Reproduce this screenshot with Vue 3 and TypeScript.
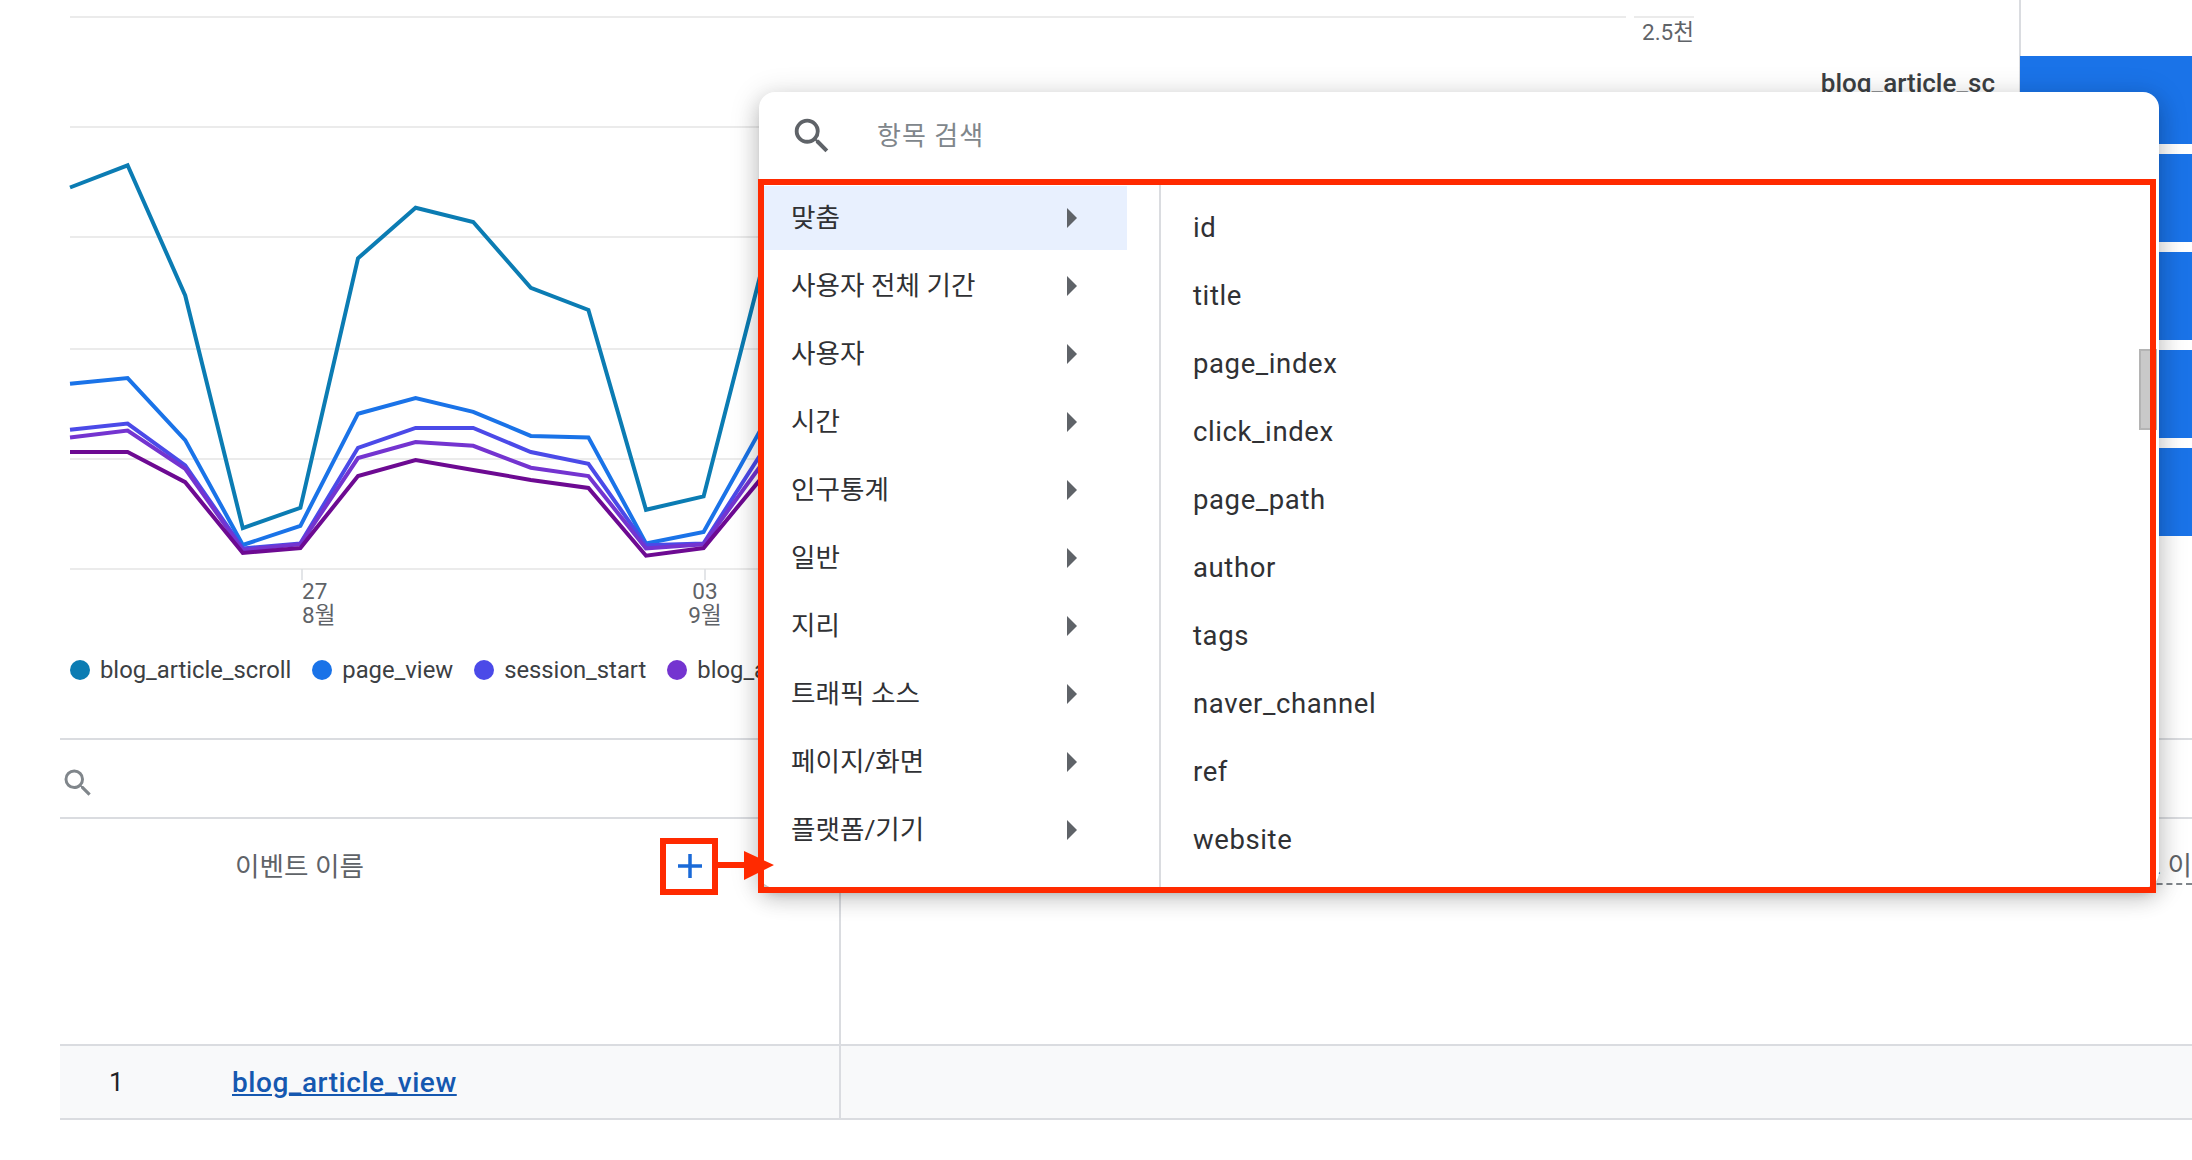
<script setup lang="ts">
const xStart = 70
const xStep = 57.6

const series = [
  { color: '#0b7cb3', ys: [187.5, 165.3, 295.4, 528.1, 507.8, 258.3, 207.8, 222, 287.8, 310, 509.8, 496.4, 271.7] },
  { color: '#1a73e8', ys: [383.8, 378.1, 440.1, 545, 525.8, 413.7, 398, 411.8, 435.9, 437.4, 543.4, 532, 428.6] },
  { color: '#4b4ae8', ys: [429.8, 423.6, 465.4, 548.4, 543.4, 447.8, 427.9, 427.9, 452, 463.8, 545.3, 543.4, 453.5] },
  { color: '#7434d0', ys: [437.4, 430.5, 468.8, 550, 544.2, 458.1, 442, 445.8, 467.7, 476.1, 548.4, 544.2, 465] },
  { color: '#6d0a92', ys: [452, 452, 482.2, 553, 548, 476.1, 460, 470, 479.9, 487.9, 555.7, 548, 478.4] },
]

const toPoints = (ys: number[]) => ys.map((y, i) => `${xStart + i * xStep},${y}`).join(' ')

const gridYs = [127, 237, 349, 459, 569]
const bars = [1, 2, 3, 4, 5]

const legend = [
  { label: 'blog_article_scroll', color: '#0b7cb3' },
  { label: 'page_view', color: '#1a73e8' },
  { label: 'session_start', color: '#4b4ae8' },
  { label: 'blog_article_view', color: '#7434d0' },
]

const categories = ['맞춤', '사용자 전체 기간', '사용자', '시간', '인구통계', '일반', '지리', '트래픽 소스', '페이지/화면', '플랫폼/기기']
const fields = ['id', 'title', 'page_index', 'click_index', 'page_path', 'author', 'tags', 'naver_channel', 'ref', 'website']
</script>

<template>
  <div class="page">
    <section class="top">
      <div class="chart-col">
        <svg class="chart" width="2020" height="632" viewBox="0 0 2020 632">
          <line x1="70" y1="17" x2="1626" y2="17" class="grid" />
          <line x1="1634" y1="17" x2="1694" y2="17" class="grid" />
          <line v-for="y in gridYs" :key="y" x1="70" :y1="y" x2="1694" :y2="y" class="grid" />
          <line x1="302" y1="569" x2="302" y2="580" class="tick" />
          <line x1="705" y1="569" x2="705" y2="580" class="tick" />
          <polyline
            v-for="s in series"
            :key="s.color"
            :points="toPoints(s.ys)"
            :stroke="s.color"
            class="trend"
          />
          <text x="1642" y="40" class="axis">2.5천</text>
          <text x="1995" y="92" text-anchor="end" class="series-name">blog_article_sc</text>
          <text x="302" y="599" class="axis">27</text>
          <text x="302" y="623" class="axis">8월</text>
          <text x="705" y="599" text-anchor="middle" class="axis">03</text>
          <text x="705" y="623" text-anchor="middle" class="axis">9월</text>
        </svg>
        <div class="legend">
          <div v-for="item in legend" :key="item.label" class="legend-item">
            <span class="dot" :style="{ background: item.color }"></span>
            <span>{{ item.label }}</span>
          </div>
        </div>
      </div>
      <div class="bars">
        <div v-for="b in bars" :key="b" class="bar"></div>
      </div>
    </section>

    <section class="table">
      <div class="table-search">
        <svg width="36" height="36" viewBox="0 0 24 24" fill="#80868b">
          <path d="M15.5 14h-.79l-.28-.27A6.47 6.47 0 0 0 16 9.5 6.5 6.5 0 1 0 9.5 16c1.61 0 3.09-.59 4.23-1.57l.27.28v.79l5 4.99L20.49 19l-4.99-5zm-6 0C7.01 14 5 11.99 5 9.5S7.01 5 9.5 5 14 7.01 14 9.5 11.99 14 9.5 14z" />
        </svg>
      </div>
      <div class="table-head">
        <div class="head-name">
          <span class="head-label">이벤트 이름</span>
          <svg class="plus" width="24" height="24" viewBox="0 0 24 24">
            <path d="M12 0v24M0 12h24" stroke="#1a6ad8" stroke-width="3.5" fill="none" />
          </svg>
        </div>
        <div class="head-metric">
          <span class="metric-label">이벤트 이</span>
        </div>
      </div>
      <div class="table-row">
        <div class="row-name">
          <span class="row-index">1</span>
          <a class="row-link">blog_article_view</a>
        </div>
      </div>
    </section>

    <div class="picker">
      <div class="picker-search">
        <svg width="46" height="46" viewBox="0 0 24 24" fill="#5f6368">
          <path d="M15.5 14h-.79l-.28-.27A6.47 6.47 0 0 0 16 9.5 6.5 6.5 0 1 0 9.5 16c1.61 0 3.09-.59 4.23-1.57l.27.28v.79l5 4.99L20.49 19l-4.99-5zm-6 0C7.01 14 5 11.99 5 9.5S7.01 5 9.5 5 14 7.01 14 9.5 11.99 14 9.5 14z" />
        </svg>
        <span class="picker-placeholder">항목 검색</span>
      </div>
      <div class="picker-body">
        <ul class="categories">
          <li v-for="(c, i) in categories" :key="c" class="category" :class="{ active: i === 0 }">
            <span class="category-label">{{ c }}</span>
            <i class="caret"></i>
          </li>
        </ul>
        <ul class="fields">
          <li v-for="f in fields" :key="f" class="field">{{ f }}</li>
        </ul>
        <div class="scroll-thumb"></div>
      </div>
    </div>

    <div class="mark mark-panel"></div>
    <div class="mark mark-plus"></div>
    <svg class="mark-arrow" width="60" height="32" viewBox="0 0 60 32">
      <path d="M0 13h28V2l30 14-30 15V19H0z" fill="#ff2a00" />
    </svg>
  </div>
</template>

<style scoped>
.page {
  position: relative;
  width: 2192px;
  height: 1160px;
  overflow: hidden;
  background: #fff;
  font-family: Roboto, "Noto Sans CJK KR", sans-serif;
  color: #202124;
}

.top {
  display: flex;
  height: 738px;
}

.chart-col {
  width: 2020px;
  flex-shrink: 0;
}

.chart {
  display: block;
}

.grid {
  stroke: #ebebeb;
  stroke-width: 2;
}

.tick {
  stroke: #dadce0;
  stroke-width: 1.5;
}

.trend {
  fill: none;
  stroke-width: 4;
  stroke-linejoin: miter;
}

.axis {
  font-size: 22.5px;
  fill: #5f6368;
}

.series-name {
  font-size: 26px;
  font-weight: 500;
  fill: #3c4043;
}

.legend {
  display: flex;
  gap: 21px;
  width: 690px;
  margin-top: 24px;
  padding-left: 70px;
  overflow: hidden;
  font-size: 23.8px;
  color: #3c4043;
}

.legend-item {
  display: flex;
  flex-shrink: 0;
  align-items: center;
  gap: 10px;
}

.dot {
  width: 20px;
  height: 20px;
  border-radius: 50%;
}

.bars {
  flex: 1;
  display: flex;
  flex-direction: column;
  gap: 10px;
  padding-top: 56px;
  border-left: 2px solid #dadce0;
  margin-top: 6px;
  margin-left: -1px;
  transform: translateY(-6px);
}

.bar {
  height: 88px;
  margin-left: -1px;
  background: #1a73e8;
}

.table {
  margin-left: 60px;
}

.table-search {
  display: flex;
  align-items: center;
  height: 81px;
  border-top: 2px solid #dadce0;
  border-bottom: 2px solid #dadce0;
  box-sizing: border-box;
  padding-top: 8px;
}

.table-head {
  display: flex;
  height: 225px;
}

.head-name {
  display: flex;
  align-items: flex-start;
  justify-content: space-between;
  box-sizing: border-box;
  width: 781px;
  padding: 33px 137px 0 175px;
  border-right: 2px solid #dadce0;
}

.head-label {
  font-size: 26.6px;
  line-height: 30px;
  color: #5f6368;
}

.plus {
  margin-top: 2px;
}

.head-metric {
  flex: 1;
  display: flex;
  justify-content: flex-end;
  align-items: flex-start;
  padding-top: 30px;
}

.metric-label {
  font-size: 26.6px;
  line-height: 34px;
  color: #5f6368;
  border-bottom: 2px dashed #80868b;
  white-space: nowrap;
}

.table-row {
  display: flex;
  height: 76px;
  box-sizing: border-box;
  background: #f8f9fa;
  border-top: 2px solid #dadce0;
  border-bottom: 2px solid #dadce0;
}

.row-name {
  display: flex;
  align-items: center;
  box-sizing: border-box;
  width: 781px;
  border-right: 2px solid #dadce0;
  padding-left: 49px;
  font-size: 26px;
}

.row-index {
  width: 123px;
}

.row-link {
  color: #1558b0;
  font-size: 28px;
  font-weight: 500;
  letter-spacing: 0.55px;
  text-decoration: underline;
}

.picker {
  position: absolute;
  left: 759px;
  top: 92px;
  width: 1400px;
  height: 796px;
  display: flex;
  flex-direction: column;
  border-radius: 16px;
  background: #fff;
  box-shadow: 0 10px 20px 2px rgba(0, 0, 0, 0.14), 0 4px 28px 4px rgba(0, 0, 0, 0.12), 0 10px 10px -6px rgba(0, 0, 0, 0.2);
}

.picker-search {
  display: flex;
  align-items: center;
  flex-shrink: 0;
  height: 87px;
  padding-left: 30px;
  gap: 42px;
}

.picker-placeholder {
  font-size: 26px;
  line-height: 30px;
  color: #80868b;
  letter-spacing: 1px;
  margin-top: 1px;
}

.picker-body {
  position: relative;
  flex: 1;
  display: flex;
  min-height: 0;
  overflow: hidden;
  border-radius: 0 0 16px 16px;
}

.categories {
  box-sizing: border-box;
  width: 402px;
  margin: 0;
  padding: 7px 32px 0 0;
  list-style: none;
  border-right: 2px solid #dadce0;
  display: flex;
  flex-direction: column;
  gap: 4px;
}

.category {
  display: flex;
  align-items: center;
  justify-content: space-between;
  height: 64px;
  flex-shrink: 0;
  padding: 0 50px 0 32px;
  font-size: 26.6px;
  color: #303134;
}

.category-label {
  margin-bottom: 5px;
}

.category.active {
  background: #e8f0fe;
}

.caret {
  width: 0;
  height: 0;
  border-left: 10px solid #5f6368;
  border-top: 10px solid transparent;
  border-bottom: 10px solid transparent;
}

.fields {
  flex: 1;
  margin: 0;
  padding: 15px 0 0 32px;
  list-style: none;
}

.field {
  height: 68px;
  line-height: 68px;
  font-size: 27.5px;
  color: #303134;
  letter-spacing: 0.6px;
}

.scroll-thumb {
  position: absolute;
  right: 2px;
  top: 170px;
  width: 18px;
  height: 81px;
  box-sizing: border-box;
  background: #c9c9c9;
  border: 2px solid #b4b4b4;
}

.mark {
  position: absolute;
  box-sizing: border-box;
  border: 6px solid #ff2a00;
}

.mark-panel {
  left: 758px;
  top: 179px;
  width: 1398px;
  height: 714px;
}

.mark-plus {
  left: 660px;
  top: 838px;
  width: 58px;
  height: 57px;
}

.mark-arrow {
  position: absolute;
  left: 716px;
  top: 849px;
}
</style>

<style>
html, body {
  margin: 0;
}
</style>
